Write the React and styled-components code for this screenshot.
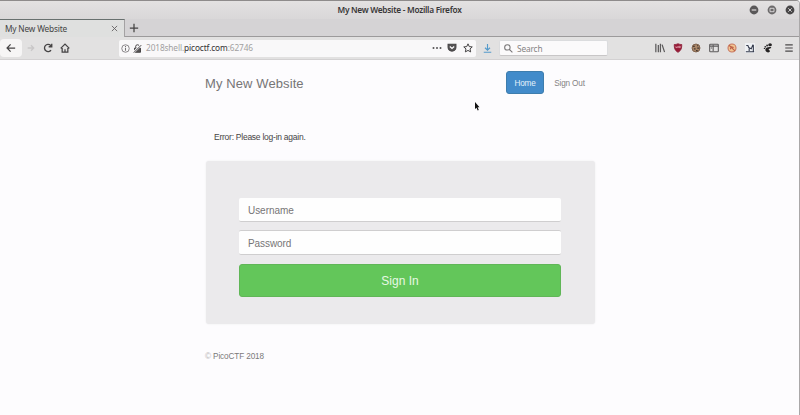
import React from "react";
import styled, { createGlobalStyle } from "styled-components";

const GlobalStyle = createGlobalStyle`
  * { box-sizing: border-box; }
  body { margin: 0; background: #fdfcfe; overflow: hidden; }
`;

const Window = styled.div`
  width: 800px;
  height: 415px;
  display: flex;
  flex-direction: column;
  border-top: 1px solid #8e8b8b;
  border-right: 1px solid #aaa8a9;
  border-top-right-radius: 4px;
  background: #fdfcfe;
  font-family: "Noto Sans", sans-serif;
  position: relative;
`;

const TitleBar = styled.header`
  height: 18px;
  display: grid;
  grid-template-columns: 1fr auto 1fr;
  align-items: center;
  background: linear-gradient(#e3e1e1, #d9d7d8);
  border-top-right-radius: 4px;
`;

const WindowTitle = styled.div`
  grid-column: 2;
  font-size: 8.3px;
  font-weight: 600;
  line-height: 16px;
  letter-spacing: ${(p) => p.$spacing || "0"};
  color: #383637;
  white-space: nowrap;
`;

const WindowButtons = styled.div`
  display: flex;
  justify-content: flex-end;
  gap: 8px;
  padding-right: 4px;
`;

const TabStrip = styled.div`
  height: 18px;
  display: flex;
  background: #d5d3d5;
`;

const Tab = styled.div`
  width: 125px;
  display: flex;
  align-items: center;
  justify-content: space-between;
  padding: 0 6px 0 5px;
  background: #dfe0df;
  border-top: 1px solid #68706f;
  border-right: 1px solid #a4a2a3;
  font-size: 8.3px;
  letter-spacing: -0.18px;
  color: #454545;
  white-space: nowrap;
`;

const StripRest = styled.div`
  flex: 1;
  padding: 4px 0 0 4px;
  border-bottom: 1px solid #9c9a9b;
  line-height: 0;
`;

const Toolbar = styled.div`
  height: 23px;
  display: flex;
  align-items: center;
  background: #e2e1e1;
  border-bottom: 1px solid #d3d1d2;
`;

const IconCell = styled.div`
  width: ${(p) => p.$w || 18}px;
  height: 18px;
  flex: none;
  display: flex;
  align-items: center;
  justify-content: center;
  background: ${(p) => p.$bg || "transparent"};
  border-radius: 4px;
`;

const AddressBar = styled.div`
  width: 357px;
  height: 17px;
  margin-left: 44px;
  flex: none;
  display: flex;
  align-items: center;
  background: #f9f8f9;
  border-radius: 2px;
`;

const Address = styled.div`
  flex: 1;
  padding-left: 3px;
  font-size: 8.3px;
  line-height: 14px;
  letter-spacing: ${(p) => p.$spacing || "0"};
  color: #a19fa0;
  white-space: nowrap;
`;

const Domain = styled.span`
  color: #343334;
`;

const SearchBar = styled.div`
  width: 109px;
  height: 16px;
  flex: none;
  display: flex;
  align-items: center;
  gap: 4px;
  padding-left: 4px;
  margin-right: 43px;
  background: #fbfafb;
  border: 1px solid #dbdcde;
  border-bottom-color: #c8c6c7;
  border-radius: 2px;
  font-size: 8.3px;
  letter-spacing: -0.15px;
  color: #858384;
`;

const Page = styled.main`
  width: 390px;
  margin-left: 205px;
  display: flex;
  flex-direction: column;
  font-family: "Liberation Sans", Arial, sans-serif;
`;

const SiteHeader = styled.div`
  height: 34px;
  padding-top: 11px;
  display: flex;
  align-items: flex-start;
  justify-content: space-between;
`;

const SiteName = styled.h1`
  margin: 0;
  font-size: 13px;
  line-height: 26px;
  font-weight: 400;
  letter-spacing: 0.1px;
  color: #777576;
`;

const Nav = styled.nav`
  display: flex;
  gap: 1px;
  margin-right: 1px;
`;

const NavItem = styled.a`
  height: 23px;
  width: ${(p) => (p.$active ? 38 : 49)}px;
  display: flex;
  align-items: center;
  justify-content: center;
  padding-top: 2px;
  border-radius: 3px;
  font-size: 8.2px;
  letter-spacing: -0.15px;
  color: ${(p) => (p.$active ? "#e2f1fa" : "#858384")};
  background: ${(p) => (p.$active ? "#428bca" : "transparent")};
  border: ${(p) => (p.$active ? "1px solid #3e7dad" : "0")};
`;

const ErrorText = styled.p`
  margin: 37px 0 0 9px;
  font-size: 8.5px;
  line-height: 13px;
  letter-spacing: -0.25px;
  color: #464445;
`;

const LoginPanel = styled.form`
  height: 163px;
  margin: 17px 0 0 1px;
  padding: 37px 34px 0 33px;
  display: flex;
  flex-direction: column;
  background: #ebeaec;
  border-radius: 3px;
  box-shadow: 0 0 2px #ebeaec;
`;

const Field = styled.div`
  height: ${(p) => p.$h}px;
  margin-bottom: ${(p) => p.$gap}px;
  padding: ${(p) => p.$top}px 0 0 9px;
  background: #fefefe;
  border-bottom: 1px solid #cfcecf;
  border-top: 1px solid ${(p) => p.$edge};
  border-radius: 2px;
  font-size: 10px;
  line-height: 12px;
  letter-spacing: ${(p) => p.$spacing};
  color: #777576;
`;

const SubmitButton = styled.button`
  height: 33px;
  margin: 0;
  padding: 1px 0 0;
  border: 1px solid #60b657;
  border-radius: 3px;
  background: #63c65a;
  color: #e7f8e4;
  font: 12px "Liberation Sans", Arial, sans-serif;
`;

const Footer = styled.footer`
  margin-top: 27px;
  font-size: 8.2px;
  line-height: 12px;
  letter-spacing: -0.12px;
  color: #7b797a;
`;

const CopyrightMark = styled.span`
  color: #b8b6b7;
`;

const Cursor = styled.svg`
  position: absolute;
  left: 474px;
  top: 101px;
`;

const Icon = ({ size = 10, children, color = "#454344", sw = 1.3 }) => (
  <svg width={size} height={size} viewBox="0 0 12 12" fill="none" stroke={color} strokeWidth={sw}>
    {children}
  </svg>
);

const WindowButton = ({ children, fill = "#5a5859" }) => (
  <svg width="10" height="10" viewBox="0 0 10 10" fill="none" stroke="#dfddde">
    <circle cx="5" cy="5" r="4.4" fill={fill} stroke="none" />
    {children}
  </svg>
);

export default function App() {
  return (
    <>
      <GlobalStyle />
      <Window>
        <TitleBar>
          <WindowTitle $spacing="-0.27px">My New Website - Mozilla Firefox</WindowTitle>
          <WindowButtons>
            <WindowButton><path d="M2.7 5h4.6" strokeWidth="1.2" /></WindowButton>
            <WindowButton fill="#6c6a6b"><path d="M3 3.3h4v3.4H3z" strokeWidth=".9" /></WindowButton>
            <WindowButton fill="#484647"><path d="m3.3 3.3 3.4 3.4m0-3.4L3.3 6.7" strokeWidth=".9" /></WindowButton>
          </WindowButtons>
        </TitleBar>
        <TabStrip>
          <Tab>
            My New Website
            <Icon size={7} color="#626061" sw={1.5}><path d="m1.5 1.5 9 9m0-9-9 9" /></Icon>
          </Tab>
          <StripRest><Icon size={10} sw={1.5}><path d="M6 1v10M1 6h10" /></Icon></StripRest>
        </TabStrip>
        <Toolbar>
          <IconCell $w={22} $bg="#f6f5f5">
            <Icon sw={1.5}><path d="M11 6H1.5M5.5 1.7 1.3 6l4.2 4.3" /></Icon>
          </IconCell>
          <IconCell>
            <Icon size={8} color="#c9c7c8" sw={2}><path d="M1 6h9M6 2l4 4-4 4" /></Icon>
          </IconCell>
          <IconCell $w={15}>
            <Icon sw={1.6}><path d="M9.6 8.5A4.3 4.3 0 1 1 9 2.8l1 1M10.5.8v3.7H6.8" /></Icon>
          </IconCell>
          <IconCell $w={20}>
            <Icon sw={1.5}><path d="M.8 6.5 6 1.4l5.2 5.1M2.6 6v5h6.8V6M6 11V7.5" /></Icon>
          </IconCell>
          <AddressBar>
            <IconCell $w={13}>
              <Icon size={9} color="#737172" sw={1.1}><circle cx="6" cy="6" r="5" /><path d="M6 5v4M6 2.7v1.2" strokeWidth="1.4" /></Icon>
            </IconCell>
            <IconCell $w={11}>
              <Icon size={9} sw={1.3}><path d="M2 5.5h8V11H2z" fill="#555354" /><path d="M3.5 5V3.5a2.5 2.5 0 0 1 5 0V5" /><path d="m0 12 12-12" stroke="#f9f8f9" strokeWidth="2.8" /><path d="m1 11.5 10-10" /></Icon>
            </IconCell>
            <Address $spacing="-0.12px">2018shell.<Domain>picoctf.com</Domain>:62746</Address>
            <IconCell $w={15}>
              <Icon size={10} color="none"><g fill="#555354"><circle cx="1.8" cy="6" r="1.2" /><circle cx="6" cy="6" r="1.2" /><circle cx="10.2" cy="6" r="1.2" /></g></Icon>
            </IconCell>
            <IconCell $w={16}>
              <Icon size={10}><path d="M1.3 1.5h9.4V5a4.7 4.7 0 0 1-9.4 0Z" fill="#555354" /><path d="M3.4 4.2 6 6.6l2.6-2.4" stroke="#fff" /></Icon>
            </IconCell>
            <IconCell $w={16}>
              <Icon size={10} sw={1.2}><path d="m6 1 1.5 3.3 3.6.4-2.7 2.4.8 3.6L6 8.9l-3.2 1.8.8-3.6L.9 4.7l3.6-.4Z" /></Icon>
            </IconCell>
          </AddressBar>
          <IconCell $w={23}>
            <Icon size={9} color="#559bcb" sw={1.5}><path d="M6 0v8M2.7 5 6 8.2 9.3 5M1 11h10" /></Icon>
          </IconCell>
          <SearchBar>
            <Icon size={9} color="#777576" sw={1.4}><circle cx="4.5" cy="4.5" r="3.6" /><path d="m7.2 7.2 4 4" /></Icon>
            Search
          </SearchBar>
          <IconCell>
            <Icon color="#5c5a5b" sw={1.5}><path d="M1 1v10M4 2.5V11M6.5 1v10M8.5 2l3 9" /></Icon>
          </IconCell>
          <IconCell>
            <Icon color="#8b2039" sw={1}><path d="M6 .8c1.8 1 3.2 1 4.5 1 0 4.2-.5 7-4.5 9.4C2 8.8 1.5 6 1.5 1.8c1.3 0 2.7 0 4.5-1Z" fill="#991b38" /><path d="M3.5 4v1.5h1.8V4m1.4 0h2v1.5h-2z" stroke="#e1a2ae" /></Icon>
          </IconCell>
          <IconCell>
            <Icon color="#765944" sw={1}><circle cx="6" cy="6" r="4.8" fill="#a98668" /><path d="M2.5 4h2m3-1h1m-5 4h2m2-1h2.5m-4 3h2" stroke="#453831" strokeWidth="1.5" /></Icon>
          </IconCell>
          <IconCell>
            <Icon color="#5d5b5c" sw={1.3}><rect x=".8" y="1.5" width="10.4" height="9" rx="1" /><path d="M5 2v8M1 3.7h10M2.2 6h1.5" /></Icon>
          </IconCell>
          <IconCell>
            <Icon color="#c97860" sw={1.3}><circle cx="6" cy="6" r="4.8" fill="#f1c592" /><path d="m2.5 2.7 7 6.8M4 7.5l1-3 3 1" stroke="#bd6048" /></Icon>
          </IconCell>
          <IconCell>
            <Icon color="#343a4c"><path d="M0 0h12v12H0z" fill="#eef0f3" stroke="none" /><path d="M1.5 3h2l1 2.5L7.5 7l2-5M1 10.5h10M5 6.5v3M10 2v8" /></Icon>
          </IconCell>
          <IconCell>
            <Icon color="none"><g fill="#252324"><ellipse cx="8.5" cy="2.2" rx="2.2" ry="1.8" /><circle cx="4.9" cy="3" r="1.1" /><circle cx="2.7" cy="4.6" r="1" /><circle cx="1.7" cy="6.5" r=".8" /><path d="M9.8 5C6 4.5 2.5 5.500 2.800 8.500c.3 3 5 3.900 5.500 1.500.3-1.400-1.800-1.500-1.400-2.500.4-.8 3-.6 3.100-2.300Z" /></g></Icon>
          </IconCell>
          <IconCell $w={24}>
            <Icon color="#4b494a" sw={1.4}><path d="M1.5 2.2h9M1.5 6h9M1.5 9.8h9" /></Icon>
          </IconCell>
        </Toolbar>
        <Page>
          <SiteHeader>
            <SiteName>My New Website</SiteName>
            <Nav>
              <NavItem $active>Home</NavItem>
              <NavItem>Sign Out</NavItem>
            </Nav>
          </SiteHeader>
          <ErrorText>Error: Please log-in again.</ErrorText>
          <LoginPanel>
            <Field $h={24} $gap={8} $top={6} $edge="#fefefe" $spacing="-0.05px">Username</Field>
            <Field $h={25} $gap={9} $top={7} $edge="#cfcecf" $spacing="-0.08px">Password</Field>
            <SubmitButton type="button">Sign In</SubmitButton>
          </LoginPanel>
          <Footer><CopyrightMark>©</CopyrightMark> PicoCTF 2018</Footer>
        </Page>
        <Cursor width="6" height="9" viewBox="0 0 6 9">
          <path d="M1 0v7l1.5-1.3L3.7 8.5l1.1-.5-1.2-2.7H5.5Z" fill="#111" />
        </Cursor>
      </Window>
    </>
  );
}
